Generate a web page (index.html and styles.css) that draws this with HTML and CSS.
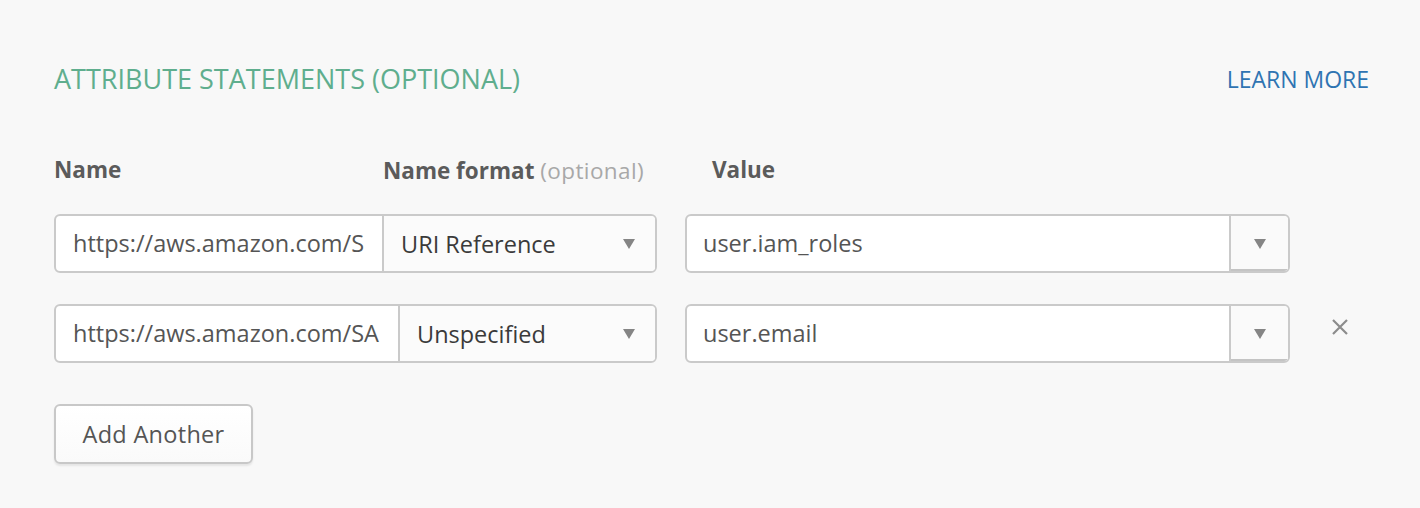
FILE: index.html
```html
<!DOCTYPE html>
<html>
<head>
<meta charset="utf-8">
<link rel="stylesheet" href="styles.css">
</head>
<body>
<div class="section">
  <div class="header">
    <h2 class="title">ATTRIBUTE STATEMENTS (OPTIONAL)</h2>
    <a class="learn" href="#">LEARN MORE</a>
  </div>
  <div class="labels">
    <div class="lbl lbl-name">Name</div>
    <div class="lbl lbl-format">Name format <span class="opt">(optional)</span></div>
    <div class="lbl lbl-value">Value</div>
  </div>
  <div class="row">
    <div class="group">
      <div class="field">https://aws.amazon.com/S</div>
      <div class="select select-wide"><span>URI Reference</span><span class="arrow"></span></div>
    </div>
    <div class="combo">
      <div class="combo-text">user.iam_roles</div>
      <div class="combo-btn"><span class="arrow"></span></div>
    </div>
    <div class="remove"></div>
  </div>
  <div class="row">
    <div class="group">
      <div class="field">https://aws.amazon.com/SA</div>
      <div class="select select-narrow"><span>Unspecified</span><span class="arrow"></span></div>
    </div>
    <div class="combo">
      <div class="combo-text">user.email</div>
      <div class="combo-btn"><span class="arrow"></span></div>
    </div>
    <div class="remove">
      <svg width="18" height="18" viewBox="0 0 18 18"><path d="M2 2 L16 16 M16 2 L2 16" stroke="#8c8c8c" stroke-width="2.2" fill="none"/></svg>
    </div>
  </div>
  <button class="add">Add Another</button>
</div>
</body>
</html>
```

FILE: styles.css
```css
* { box-sizing: border-box; }
html, body {
  margin: 0;
  padding: 0;
  background: #f8f8f8;
  font-family: "Open Sans", "Lato", sans-serif;
  color: #5b5b5b;
}
.section {
  padding: 62px 51px 0 54px;
  width: 1420px;
  height: 508px;
}
.header {
  display: flex;
  justify-content: space-between;
  align-items: center;
  height: 34px;
}
.title {
  margin: 0;
  font-size: 27px;
  line-height: 34px;
  font-weight: 400;
  color: #5fae8e;
}
.learn {
  font-size: 23px;
  line-height: 34px;
  color: #2f74b2;
  text-decoration: none;
}
.labels {
  display: flex;
  margin-top: 59px;
  height: 28px;
  align-items: center;
}
.lbl {
  font-size: 22.5px;
  font-weight: 700;
  color: #5b5b5b;
}
.lbl-name { width: 329px; }
.lbl-format { width: 329px; padding-top: 3px; }
.lbl-value { padding-top: 1px; }
.opt { font-weight: 400; color: #a8a8a8; letter-spacing: 0.4px; }
.row {
  display: flex;
  align-items: center;
  height: 59px;
  margin-top: 31px;
}
.group {
  display: flex;
  width: 603px;
  height: 59px;
  border: 2px solid #cacaca;
  border-radius: 6px;
  background: #fff;
  overflow: hidden;
}
.field {
  flex: 1;
  min-width: 0;
  white-space: nowrap;
  overflow: hidden;
  padding: 0 0 0 17px;
  font-size: 23.5px;
  line-height: 55px;
  color: #555;
}
.select {
  display: flex;
  align-items: center;
  justify-content: space-between;
  border-left: 2px solid #cacaca;
  background: #fbfbfb;
  padding: 0 20px 0 17px;
  font-size: 23.5px;
  color: #3a3a3a;
}
.select-wide { width: 273px; }
.select-narrow { width: 257px; }
.arrow {
  width: 0;
  height: 0;
  border-left: 6px solid transparent;
  border-right: 6px solid transparent;
  border-top: 10px solid #858585;
}
.combo {
  display: flex;
  width: 605px;
  height: 59px;
  margin-left: 28px;
  border: 2px solid #cacaca;
  border-radius: 6px;
  background: #fff;
  overflow: hidden;
}
.combo-text {
  flex: 1;
  padding-left: 16px;
  font-size: 23.5px;
  line-height: 55px;
  color: #555;
}
.combo-btn {
  width: 59px;
  display: flex;
  align-items: center;
  justify-content: center;
  border-left: 2px solid #cacaca;
  background: #fafafa;
  box-shadow: inset 0 -2px 0 #c4c4c4;
}
.remove {
  width: 18px;
  height: 18px;
  margin-left: 41px;
  align-self: flex-start;
  margin-top: 14px;
}
.remove svg { display: block; }
.add {
  display: block;
  margin-top: 41px;
  width: 199px;
  height: 60px;
  border: 2px solid #c8c8c8;
  border-radius: 6px;
  background: linear-gradient(#ffffff, #fafafa);
  box-shadow: 0 2px 2px rgba(0,0,0,0.08);
  font-family: "Open Sans", "Lato", sans-serif;
  font-size: 23.5px;
  color: #555;
  padding: 0;
  letter-spacing: 0.3px;
}
```
